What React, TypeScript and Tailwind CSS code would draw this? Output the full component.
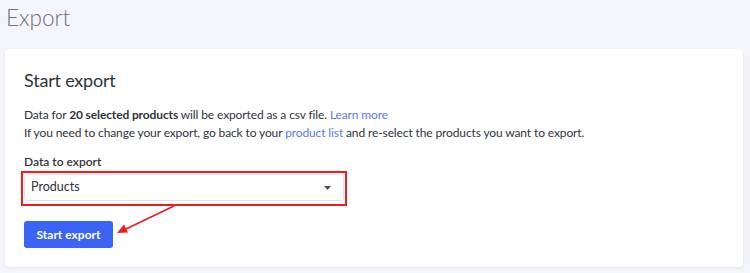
export default function App() {
  return (
    <div
      className="relative w-[750px] h-[273px] bg-[#f4f5fa] overflow-hidden text-[#313440]"
      style={{ fontFamily: 'Lato, "Liberation Sans", sans-serif' }}
    >
      {/* page title */}
      <h1 className="pl-[6px] pt-[2px] text-[22.5px] font-light leading-[32px] text-[#6d7180]">Export</h1>

      {/* card */}
      <div className="mt-[15px] ml-[5px] w-[738px] h-[218px] bg-white rounded-[4px] shadow-[0_1px_3px_rgba(0,0,0,0.08)] pl-[19px] pt-[19px]">
        <h2 className="text-[18px] tracking-[-0.2px] leading-[24px] text-[#313440]">Start export</h2>

        <div className="mt-[14px] text-[12px] tracking-[-0.12px] leading-[17.5px] text-[#313440]">
          <p>
            Data for <span className="font-bold">20 selected products</span> will be exported as a csv file.{' '}
            <a className="text-[#5c77f5]">Learn more</a>
          </p>
          <p>
            If you need to change your export, go back to your <a className="text-[#5c77f5]">product list</a> and
            re-select the products you want to export.
          </p>
        </div>

        <label className="block mt-[14px] text-[12px] leading-[14px] font-semibold text-[#313440]">Data to export</label>

        {/* select with red annotation box */}
        <div className="mt-[2px] -ml-[3px] w-[326px] h-[35px] border-2 border-[#ee1c1c] p-px">
          <div className="flex items-center justify-between h-[27px] rounded-[3px] border border-[#e1e3ec] pl-[6px] pr-[12px] text-[12.5px] text-[#313440]">
            <span>Products</span>
            <svg width="7" height="4" viewBox="0 0 7 4">
              <path d="M0 0h7L3.5 4z" fill="#4b4f5e" />
            </svg>
          </div>
        </div>

        <button className="mt-[15px] w-[89px] h-[27px] rounded-[3px] bg-[#3c64f4] text-white text-[12px] font-bold">
          Start export
        </button>
      </div>

      {/* red arrow annotation */}
      <svg className="absolute left-0 top-0 pointer-events-none" width="750" height="273">
        <line x1="174" y1="206" x2="126" y2="229" stroke="#ee1c1c" strokeWidth="1.6" />
        <path d="M117 233 L124 224.5 L128 232.5 Z" fill="#ee1c1c" />
      </svg>
    </div>
  );
}
